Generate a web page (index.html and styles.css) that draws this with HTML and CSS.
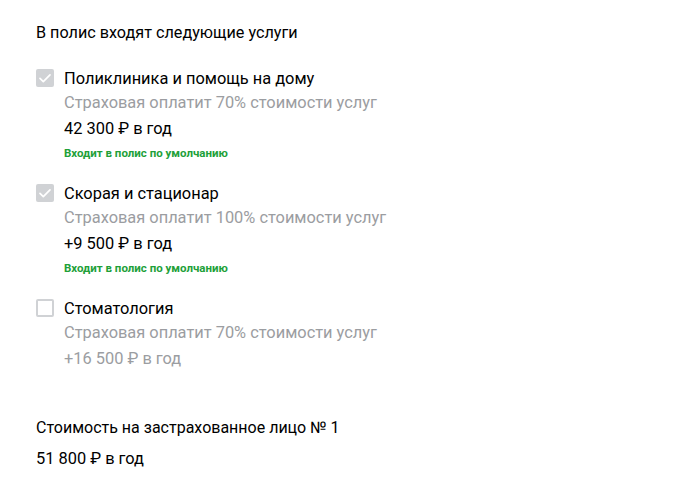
FILE: index.html
```html
<!DOCTYPE html>
<html lang="ru">
<head>
<meta charset="utf-8">
<link rel="stylesheet" href="styles.css">
</head>
<body>
<div class="page">
  <h2 class="title">В полис входят следующие услуги</h2>
  <div class="list">
    <div class="item">
      <span class="cb cb-checked"><svg viewBox="0 0 18 18" width="18" height="18"><path d="M4 9.4l3.3 3.3L14 5.8" fill="none" stroke="#fff" stroke-width="1.7" stroke-linecap="round" stroke-linejoin="round"/></svg></span>
      <div class="body">
        <div class="name">Поликлиника и помощь на дому</div>
        <div class="desc">Страховая оплатит 70% стоимости услуг</div>
        <div class="price">42 300 ₽ в год</div>
        <div class="note">Входит в полис по умолчанию</div>
      </div>
    </div>
    <div class="item">
      <span class="cb cb-checked"><svg viewBox="0 0 18 18" width="18" height="18"><path d="M4 9.4l3.3 3.3L14 5.8" fill="none" stroke="#fff" stroke-width="1.7" stroke-linecap="round" stroke-linejoin="round"/></svg></span>
      <div class="body">
        <div class="name">Скорая и стационар</div>
        <div class="desc">Страховая оплатит 100% стоимости услуг</div>
        <div class="price">+9 500 ₽ в год</div>
        <div class="note">Входит в полис по умолчанию</div>
      </div>
    </div>
    <div class="item">
      <span class="cb"></span>
      <div class="body">
        <div class="name">Стоматология</div>
        <div class="desc">Страховая оплатит 70% стоимости услуг</div>
        <div class="price price-muted">+16 500 ₽ в год</div>
      </div>
    </div>
  </div>
  <div class="total">
    <div class="total-label">Стоимость на застрахованное лицо № 1</div>
    <div class="total-value">51 800 ₽ в год</div>
  </div>
</div>
</body>
</html>
```
FILE: styles.css
```css
html, body {
  margin: 0;
  padding: 0;
  background: #fff;
}
body {
  font-family: Roboto, "Liberation Sans", sans-serif;
  color: #000;
}
.page {
  padding: 21px 36px 0;
}
.title {
  margin: 0;
  font-size: 16.2px;
  font-weight: 400;
  line-height: 24px;
}
.list {
  display: flex;
  flex-direction: column;
  gap: 21px;
  margin-top: 22px;
}
.item {
  display: flex;
  gap: 10px;
}
.cb {
  flex: none;
  width: 18px;
  height: 18px;
  box-sizing: border-box;
  border-radius: 2px;
  border: 2px solid #d0d2d5;
  margin-top: 2px;
  display: flex;
  align-items: center;
  justify-content: center;
}
.cb-checked {
  background: #d0d2d5;
  border: none;
}
.body {
  display: flex;
  flex-direction: column;
}
.name, .desc, .price {
  font-size: 16.4px;
  line-height: 24px;
}
.desc {
  color: #9b9da1;
  margin-bottom: 2px;
}
.price-muted {
  color: #9b9da1;
}
.note {
  margin-top: 4px;
  font-size: 11.5px;
  font-weight: 700;
  line-height: 16px;
  color: #21a038;
}
.total {
  margin-top: 45px;
}
.total-label {
  font-size: 16px;
  line-height: 24px;
}
.total-value {
  margin-top: 7px;
  font-size: 16.4px;
  line-height: 24px;
}
```
